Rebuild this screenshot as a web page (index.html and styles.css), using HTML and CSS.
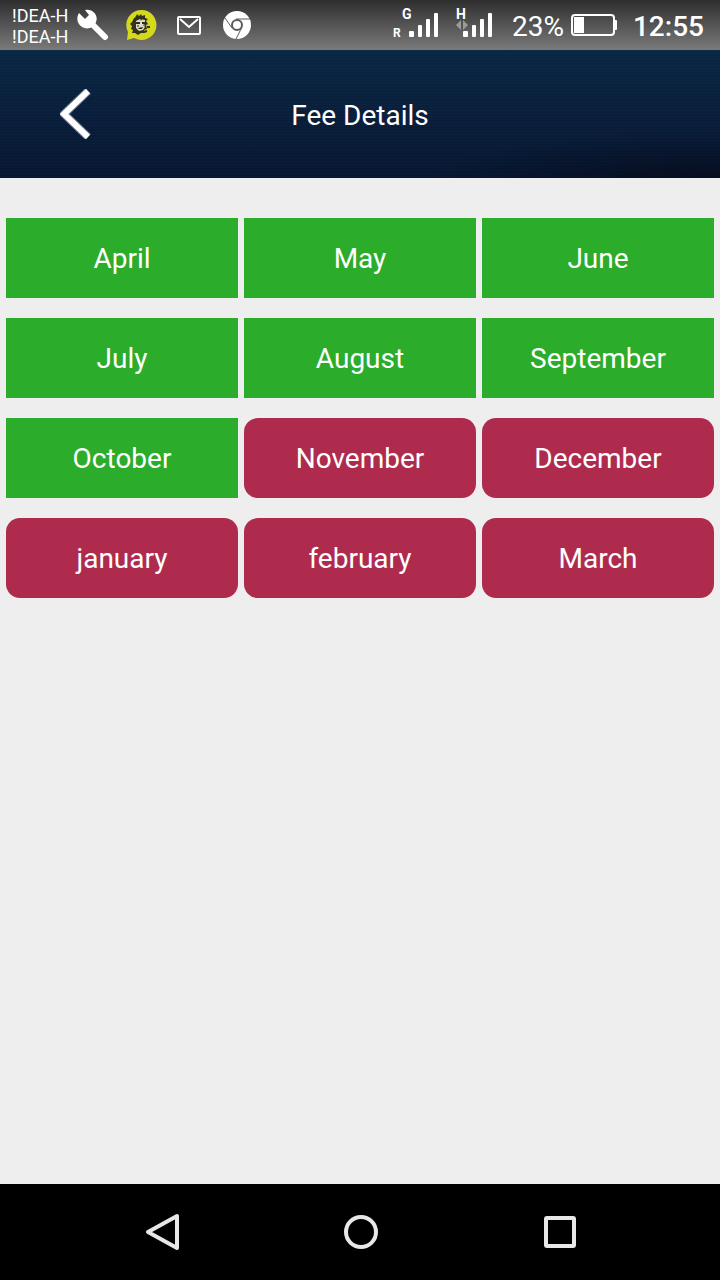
FILE: index.html
```html
<!DOCTYPE html>
<html lang="en">
<head>
    <meta charset="UTF-8">
    <meta name="viewport" content="width=device-width, initial-scale=1.0">
    <title>Fee Details</title>
    <link rel="stylesheet" href="styles.css">
</head>
<body>
    <div class="status-bar">
        <div class="carrier">
            <span>!DEA-H</span>
            <span>!DEA-H</span>
        </div>
        <div class="notifications">
            <svg width="32" height="32" viewBox="0 0 32 32" fill="none" stroke="#fff">
                <path d="M16 16L28 28" stroke-width="6" stroke-linecap="round"/>
                <path d="M8 1c7-2 14 5 11 12-2 6-9 8-14 5S-1 9 2 4l6 6 4-4z" fill="#fff" stroke="none"/>
            </svg>
            <svg width="32" height="32" viewBox="0 0 32 32">
                <path d="M16 1a15 15 0 1 1-7 28L2 31l1-8A15 15 0 0 1 16 1z" fill="#d5d91c"/>
                <path d="M9 9l2-1 1-3 2 2 2-2 1 2 3-1 0 3 3 1-2 2 2 3-2 1 1 4-3 1 1 3-4 0-3 2-3-2-3 0 1-3-2-1 1-3-2-2 2-2z" fill="#33331c"/>
                <path d="M11 12l4-2 5 1 0 4-2 1 2 2-2 3-4 1-3-3z" fill="#dedbc4"/>
                <path d="M11 13h4v2h-4zM17 13h3v2h-3zM13 19l5-1-1 2h-3zM15 9l2 1-1 2zM18 8h2v2h-2z" fill="#2b2b25"/>
                <path d="M12 16h2v2h-2zM18 16h2v1h-2z" fill="#b96a72"/>
                <path d="M10 22l3 1M19 23l3-1M8 17h2M22 18h3M11 7l2 2" stroke="#33331c" stroke-width="2"/>
            </svg>
            <svg width="32" height="32" viewBox="0 0 32 32" fill="none" stroke="#fff" stroke-width="2">
                <rect x="5" y="8" width="22" height="17" rx="1"/>
                <path d="M7 10l9 8 9-8"/>
            </svg>
            <svg width="32" height="32" viewBox="0 0 32 32">
                <circle cx="16" cy="16" r="14" fill="#fff"/>
                <g fill="none" stroke="#5a5a5a">
                    <circle cx="16" cy="16" r="5" stroke-width="2"/>
                    <path d="M15 10h14M21 18l-6 12M11 19L4 9"/>
                </g>
            </svg>
        </div>
        <div class="signals">
            <svg width="48" height="50" viewBox="0 0 48 50" fill="#fff">
                <text class="network" x="10" y="19">G</text>
                <text class="roaming" x="1" y="37">R</text>
                <rect x="17" y="31" width="5" height="6" rx="1"/>
                <rect x="26" y="25" width="4" height="12" rx="1"/>
                <rect x="34" y="19" width="4" height="18" rx="1"/>
                <rect x="42" y="13" width="4" height="24" rx="1"/>
            </svg>
            <svg width="48" height="50" viewBox="0 0 48 50" fill="#fff">
                <text class="network" x="8" y="19">H</text>
                <path d="M13 20v10l-5-5zM15 20v10l5-5z" fill="#9a9a9a"/>
                <rect x="15" y="31" width="5" height="6" rx="1"/>
                <rect x="24" y="25" width="4" height="12" rx="1"/>
                <rect x="32" y="19" width="4" height="18" rx="1"/>
                <rect x="40" y="13" width="4" height="24" rx="1"/>
            </svg>
        </div>
        <span class="percent">23%</span>
        <svg class="battery" width="46" height="24" viewBox="0 0 46 24">
            <rect x="1" y="2" width="42" height="20" rx="3" fill="none" stroke="#fff" stroke-width="2"/>
            <rect x="3" y="4" width="10" height="16" fill="#fff"/>
            <rect x="43" y="7" width="3" height="10" rx="1" fill="#fff"/>
        </svg>
        <span class="clock">12:55</span>
    </div>

    <header class="header">
        <button class="back" aria-label="Back">
            <svg width="32" height="50" viewBox="0 0 32 50" fill="none" stroke="#fff">
                <path d="M28 2L4 25l24 23" stroke-width="8" opacity="0.4"/>
                <path d="M28 2L4 25l24 23" stroke-width="6"/>
            </svg>
        </button>
        <h1>Fee Details</h1>
    </header>

    <main class="months">
        <button class="month paid">April</button>
        <button class="month paid">May</button>
        <button class="month paid">June</button>
        <button class="month paid">July</button>
        <button class="month paid">August</button>
        <button class="month paid">September</button>
        <button class="month paid">October</button>
        <button class="month due">November</button>
        <button class="month due">December</button>
        <button class="month due">january</button>
        <button class="month due">february</button>
        <button class="month due">March</button>
    </main>

    <nav class="nav-bar">
        <button aria-label="Back">
            <svg width="40" height="40" viewBox="0 0 40 40">
                <path d="M37 4v32L8 20z"/>
            </svg>
        </button>
        <button aria-label="Home">
            <svg width="40" height="40" viewBox="0 0 40 40">
                <circle cx="21" cy="20" r="15"/>
            </svg>
        </button>
        <button aria-label="Recent apps">
            <svg width="40" height="40" viewBox="0 0 40 40">
                <rect x="6" y="6" width="28" height="28" rx="1"/>
            </svg>
        </button>
    </nav>
</body>
</html>
```

FILE: styles.css
```css
* {
    box-sizing: border-box;
}
body {
    margin: 0;
    min-height: 100vh;
    display: flex;
    flex-direction: column;
    font-family: Roboto, sans-serif;
    font-size: 28px;
    color: #fff;
    background-color: #eee;
}
button {
    margin: 0;
    padding: 0;
    border: none;
    font: inherit;
    color: inherit;
    background: none;
    cursor: pointer;
}
svg {
    display: block;
    flex-shrink: 0;
}

/* status bar */
.status-bar {
    height: 50px;
    padding: 0 16px 0 12px;
    display: flex;
    align-items: center;
    background: linear-gradient(#2e2e2e, #7a7a7a);
}
.carrier {
    display: flex;
    flex-direction: column;
    margin-right: 9px;
    padding-top: 2px;
    font-size: 18px;
    line-height: 21px;
}
.notifications {
    display: flex;
    gap: 16px;
}
.signals {
    display: flex;
    gap: 8px;
    margin-left: auto;
}
.network {
    font-size: 14px;
    font-weight: 700;
}
.roaming {
    font-size: 12px;
    font-weight: 700;
}
.percent {
    margin-left: 16px;
    padding-top: 2px;
}
.battery {
    margin-left: 7px;
}
.clock {
    margin-left: 16px;
    padding-top: 2px;
    font-weight: 500;
}

/* header */
.header {
    height: 128px;
    padding: 0 60px;
    display: grid;
    grid-template-columns: 32px 1fr 32px;
    align-items: center;
    background:
        radial-gradient(ellipse at 100% 110%, rgba(5, 8, 22, 0.8), rgba(5, 8, 22, 0) 30%),
        repeating-linear-gradient(rgba(255, 255, 255, 0.01) 0 1px, rgba(0, 0, 0, 0.02) 1px 3px),
        linear-gradient(#0a2744, #071733);
}
.header h1 {
    margin: 0;
    padding-top: 2px;
    font-size: 28px;
    font-weight: 400;
    text-align: center;
}

/* month buttons */
.months {
    flex: 1;
    padding: 40px 6px;
    display: grid;
    grid-template-columns: repeat(3, 1fr);
    align-content: start;
    gap: 20px 6px;
}
.month {
    height: 80px;
}
.paid {
    background-color: #2bac2a;
}
.due {
    background-color: #af2b4e;
    border-radius: 14px;
}

/* navigation bar */
.nav-bar {
    height: 96px;
    padding: 0 60px;
    display: grid;
    grid-template-columns: repeat(3, 1fr);
    background-color: #000;
}
.nav-bar button {
    display: flex;
    justify-content: center;
    align-items: center;
}
.nav-bar svg {
    fill: none;
    stroke: #e8e8e8;
    stroke-width: 4;
    stroke-linejoin: round;
}
```
